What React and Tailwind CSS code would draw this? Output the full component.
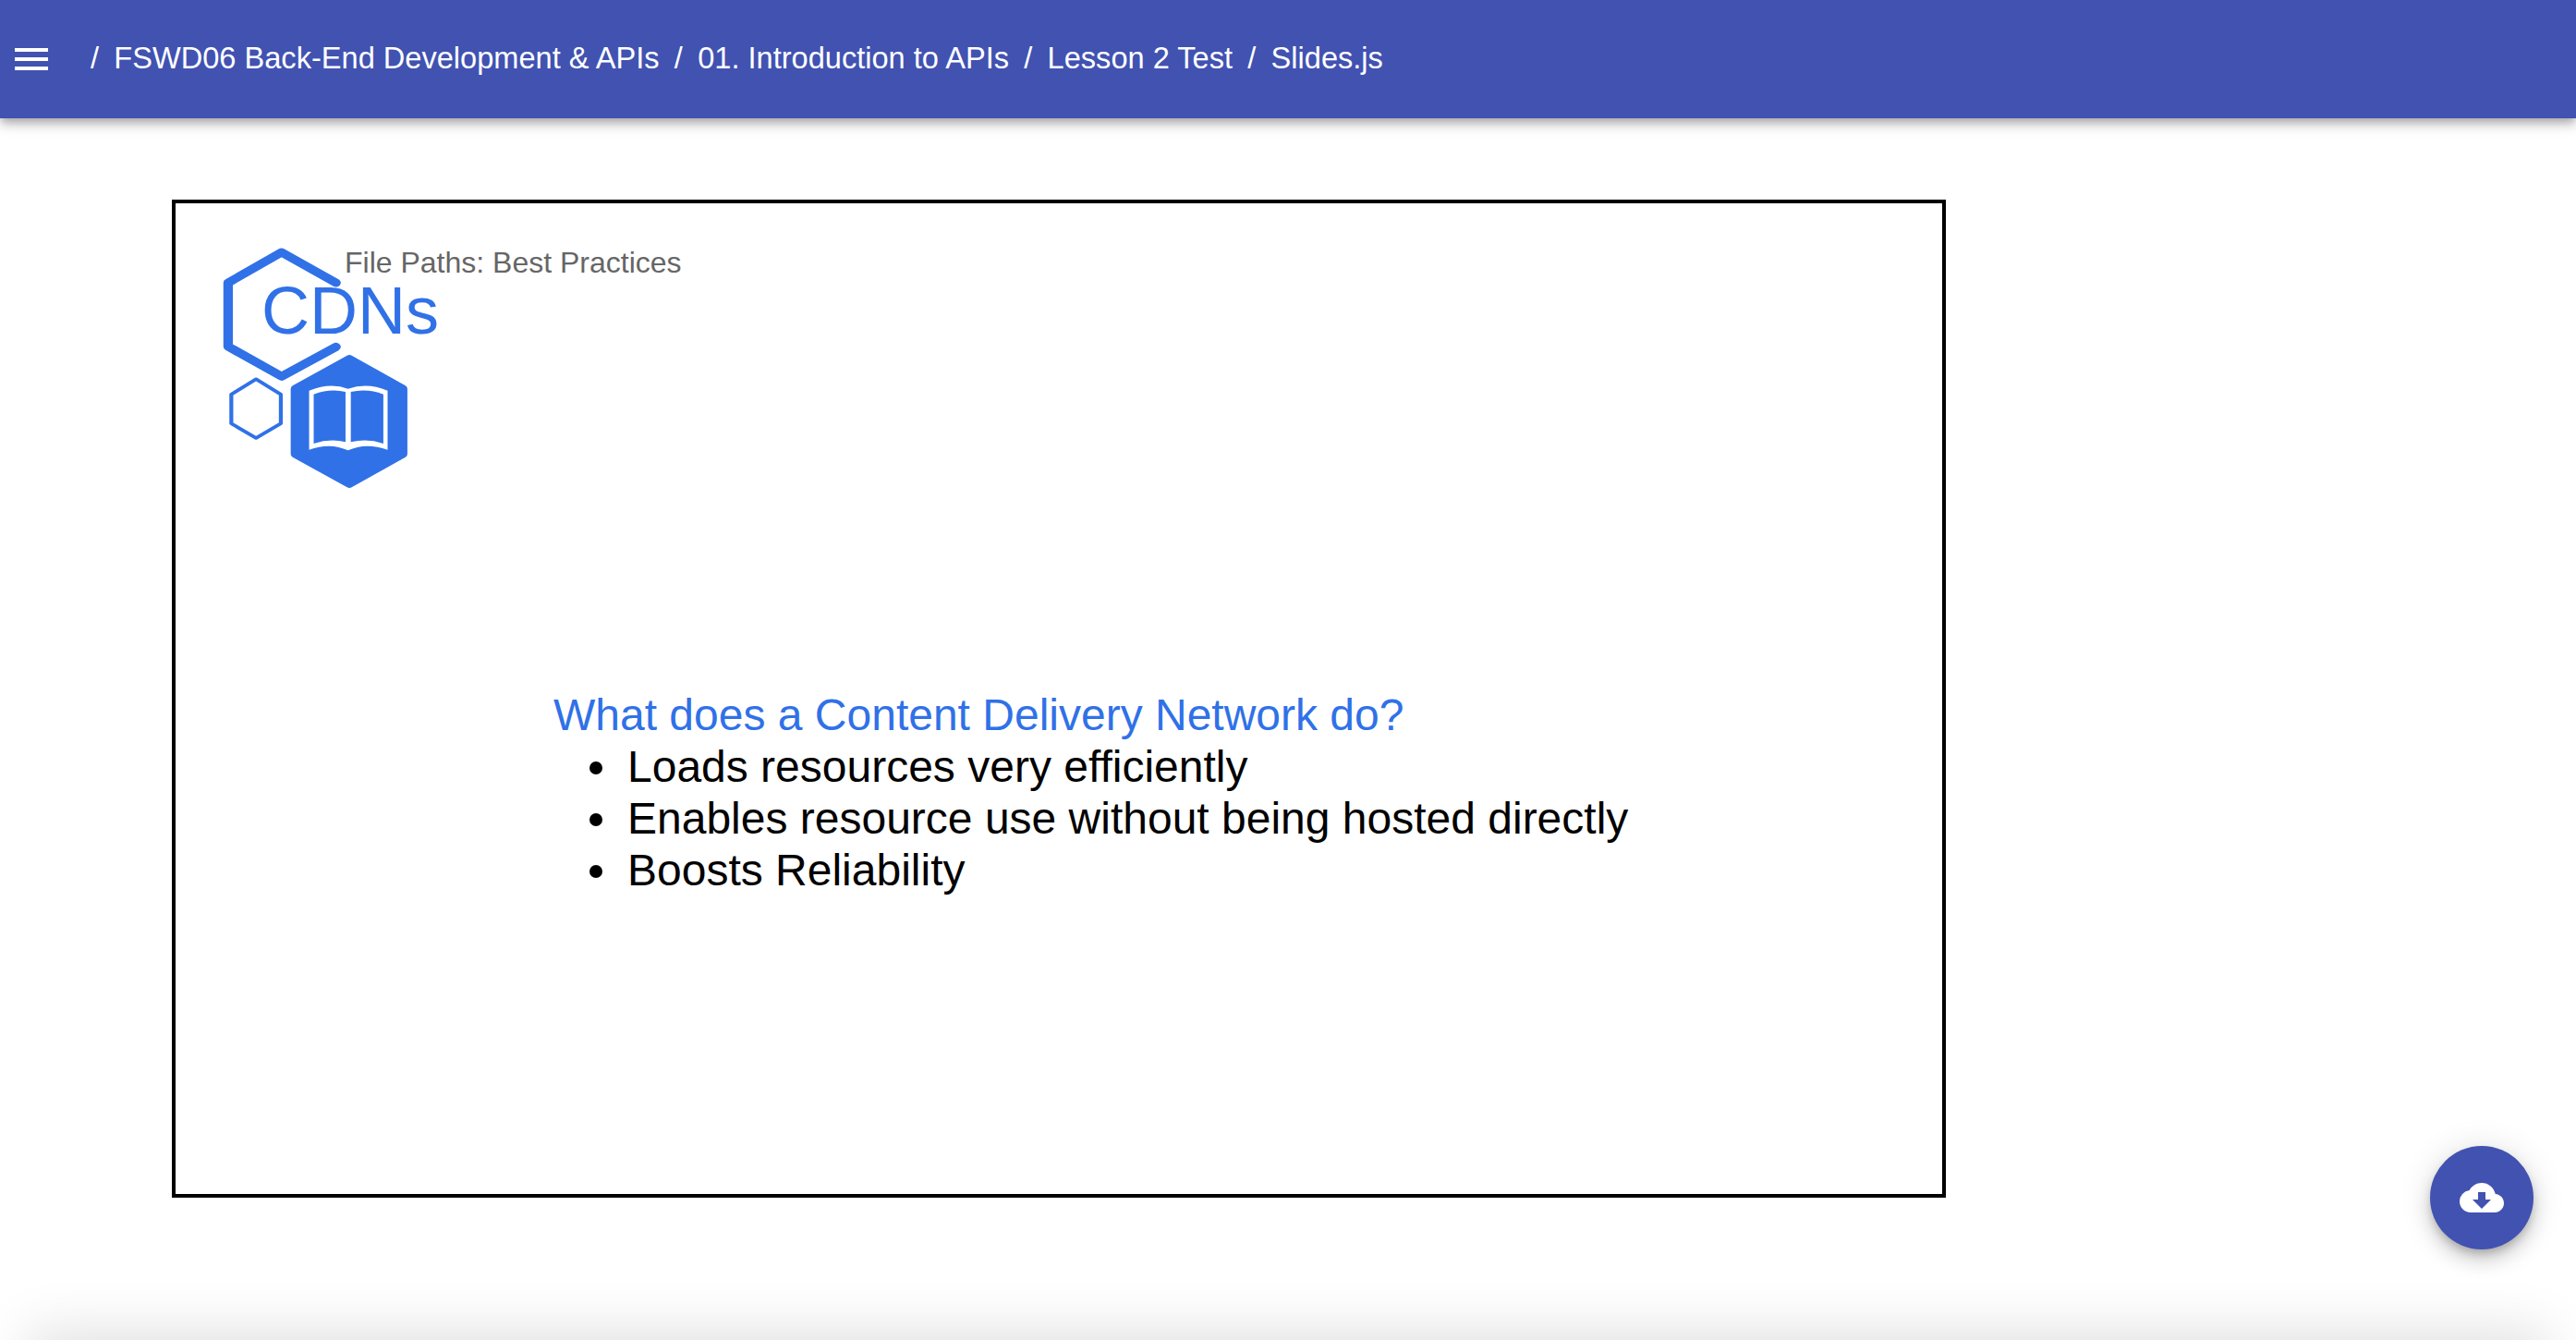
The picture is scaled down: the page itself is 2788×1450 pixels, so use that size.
import { MdMenu, MdCloudDownload } from 'react-icons/md';

const crumbs = ['FSWD06 Back-End Development & APIs', '01. Introduction to APIs', 'Lesson 2 Test', 'Slides.js'];
const bullets = ['Loads resources very efficiently', 'Enables resource use without being hosted directly', 'Boosts Reliability'];

function Logo() {
  // viewBox is the traced crop, squeezed to 600x350
  return (
    <svg className="absolute left-[-20px] top-[-20px]" width="600" height="350" viewBox="0 0 1568 1050" preserveAspectRatio="none" fill="none">
      <path d="M506 318 L352 219 L201 318 V525 L352 622 L506 526" stroke="#3071e7" strokeWidth="27" strokeLinejoin="round" strokeLinecap="round" />
      <path d="M280 631 L350 680 V775 L280 822 L210 775 V680 Z" stroke="#3071e7" strokeWidth="11" strokeLinejoin="round" />
      <path d="M544 564 L696 662 V874 L544 972 L390 874 V662 Z" fill="#3071e7" stroke="#3071e7" strokeWidth="24" strokeLinejoin="round" />
      <path d="M430 668 Q490 640 540 662 Q595 640 652 668 V860 Q590 835 540 862 Q490 835 430 860 Z" fill="#fff" />
      <path d="M443 680 Q490 660 533 672 V835 Q490 822 443 840 Z" fill="#3071e7" />
      <path d="M548 672 Q595 660 640 680 V840 Q595 822 548 835 Z" fill="#3071e7" />
    </svg>
  );
}

export default function App() {
  return (
    <div className="relative h-screen overflow-hidden bg-white font-['Liberation_Sans',Arial,sans-serif]">
      <header className="relative z-10 flex h-[128px] items-center bg-[#4152b1] text-[32.6px] text-white shadow-[0_4px_8px_-2px_rgba(0,0,0,0.2),0_8px_10px_0_rgba(0,0,0,0.14),0_2px_20px_0_rgba(0,0,0,0.12)]">
        <MdMenu className="ml-[10px] shrink-0" size={48} />
        <nav className="ml-[40px] mt-[-2px] flex items-center">
          {crumbs.map((crumb) => (
            <span key={crumb} className="flex items-center">
              <span className="mr-[16.25px]">/</span>
              <span className="mr-[16.25px]">{crumb}</span>
            </span>
          ))}
        </nav>
      </header>

      <main className="pl-[186px] pt-[88px]">
        <section className="relative h-[1080px] w-[1920px] border-4 border-black">
          <Logo />
          <p className="absolute left-[183px] top-[48px] text-[32px] leading-none text-[#666666]">File Paths: Best Practices</p>
          <h1 className="absolute left-[93px] top-[80px] text-[72px] leading-none text-[#3071e7]">CDNs</h1>

          <div className="pl-[409px] pt-[526px]">
            <h2 className="text-[48px] leading-[56px] text-[#3071e7]">What does a Content Delivery Network do?</h2>
            <ul className="pl-[39px] text-[48px] leading-[56px] text-black">
              {bullets.map((b) => (
                <li key={b} className="flex items-center">
                  <span className="mr-[27px] mt-[2px] size-[14px] shrink-0 rounded-full bg-black" />
                  {b}
                </li>
              ))}
            </ul>
          </div>
        </section>
      </main>

      <button className="absolute bottom-[98px] right-[46px] z-10 flex size-[112px] items-center justify-center rounded-full bg-[#4152b1] text-white shadow-[0_6px_10px_-2px_rgba(0,0,0,0.2),0_12px_20px_0_rgba(0,0,0,0.14),0_2px_36px_0_rgba(0,0,0,0.12)]">
        <MdCloudDownload size={48} />
      </button>

      {/* edge of a panel sitting just under the window */}
      <div className="absolute left-[40px] right-[40px] top-full h-[100px] shadow-[0_0_60px_10px_rgba(0,0,0,0.12)]" />
    </div>
  );
}
